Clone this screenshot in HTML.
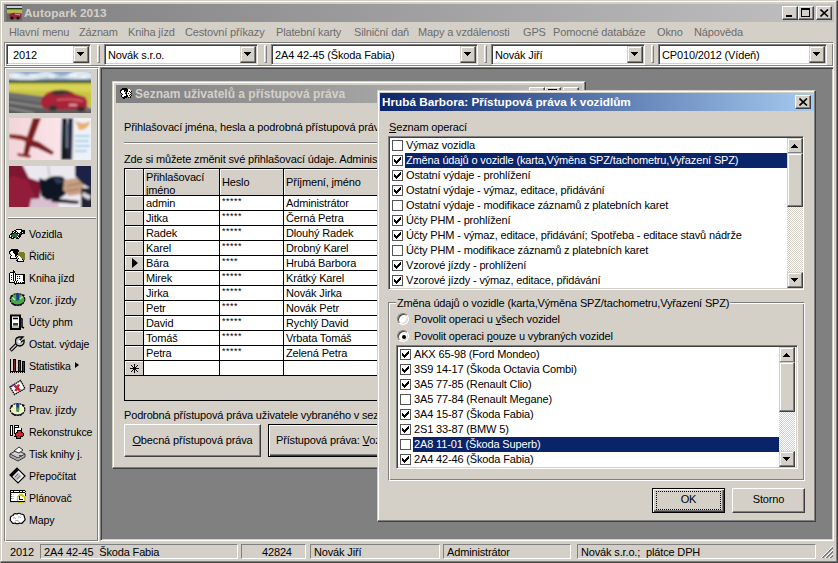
<!DOCTYPE html>
<html><head><meta charset="utf-8"><style>
*{box-sizing:border-box}
html,body{margin:0;padding:0}
body{width:838px;height:563px;overflow:hidden;position:relative;background:#D4D0C8;font-family:"Liberation Sans",sans-serif;font-size:11px;letter-spacing:-0.15px;color:#000}
.a{position:absolute}
.t{white-space:nowrap}
.btn{background:#D4D0C8;border:1px solid;border-color:#fff #404040 #404040 #fff;box-shadow:inset -1px -1px #808080,inset 1px 1px #D4D0C8}
.wfr{background:#D4D0C8;border:1px solid;border-color:#D4D0C8 #404040 #404040 #D4D0C8;box-shadow:inset -1px -1px #808080,inset 1px 1px #fff}
.sunk{border:1px solid;border-color:#808080 #fff #fff #808080;box-shadow:inset 1px 1px #404040,inset -1px -1px #D4D0C8}
.etch{border:1px solid;border-color:#808080 #fff #fff #808080;box-shadow:inset 1px 1px #fff,inset -1px -1px #808080}
.thin{border:1px solid;border-color:#808080 #fff #fff #808080}
.u{text-decoration:underline}
</style></head><body>
<div class="a wfr" style="left:0px;top:0px;width:838px;height:563px;"></div><div class="a " style="left:4px;top:4px;width:830px;height:18px;background:linear-gradient(to right,#808080,#C0C0C0)"></div><svg class="a" style="left:6px;top:5px" width="16" height="16"><rect width="16" height="16" fill="#707070"/><rect x="0" y="0" width="16" height="1" fill="#404040"/><rect x="1" y="1" width="15" height="2" fill="#c8ccd8"/><rect x="1" y="3" width="15" height="1.5" fill="#203818"/><rect x="1" y="4.5" width="15" height="4" fill="#b8b850"/><rect x="1" y="8.5" width="15" height="7" fill="#686868"/><path d="M3 10 Q6 7 10 8 L15 9 L15 13 L4 14Z" fill="#902838"/><path d="M9 9 L14 10" stroke="#e0a0b0" stroke-width="1"/><circle cx="6" cy="13" r="1.6" fill="#101010"/><circle cx="12" cy="13" r="1.6" fill="#201010"/></svg><div class="a t" style="left:24px;top:4px;height:18px;line-height:18px;font-weight:bold;font-size:11.8px;letter-spacing:0.1px;color:#D4D0C8">Autopark 2013</div><div class="a btn" style="left:782px;top:6px;width:16px;height:14px;"><div class="a" style="left:3px;top:8px;width:6px;height:2px;background:#000"></div></div><div class="a btn" style="left:798px;top:6px;width:16px;height:14px;"><div class="a" style="left:2px;top:1px;width:9px;height:9px;border:1px solid #000;border-top-width:2px"></div></div><div class="a btn" style="left:816px;top:6px;width:16px;height:14px;"><svg class="a" style="left:3px;top:2px" width="9" height="8" viewBox="0 0 9 8"><path d="M0.5 0.5L8 7.5M8 0.5L0.5 7.5" stroke="#000" stroke-width="1.6"/></svg></div><div class="a t" style="left:9px;top:23px;height:19px;line-height:19px;color:#6c6c6c">Hlavní menu</div><div class="a t" style="left:79px;top:23px;height:19px;line-height:19px;color:#6c6c6c">Záznam</div><div class="a t" style="left:128px;top:23px;height:19px;line-height:19px;color:#6c6c6c">Kniha jízd</div><div class="a t" style="left:185px;top:23px;height:19px;line-height:19px;color:#6c6c6c">Cestovní příkazy</div><div class="a t" style="left:276px;top:23px;height:19px;line-height:19px;color:#6c6c6c">Platební karty</div><div class="a t" style="left:354px;top:23px;height:19px;line-height:19px;color:#6c6c6c">Silniční daň</div><div class="a t" style="left:418px;top:23px;height:19px;line-height:19px;color:#6c6c6c">Mapy a vzdálenosti</div><div class="a t" style="left:523px;top:23px;height:19px;line-height:19px;color:#6c6c6c">GPS</div><div class="a t" style="left:553px;top:23px;height:19px;line-height:19px;color:#6c6c6c">Pomocné databáze</div><div class="a t" style="left:657px;top:23px;height:19px;line-height:19px;color:#6c6c6c">Okno</div><div class="a t" style="left:694px;top:23px;height:19px;line-height:19px;color:#6c6c6c">Nápověda</div><div class="a etch" style="left:4px;top:42px;width:830px;height:25px;"></div><div class="a sunk" style="left:6px;top:44px;width:85px;height:21px;background:#fff"><div class="a t" style="left:6px;top:2px;height:17px;line-height:17px">2012</div><div class="a wfr" style="right:1px;top:1px;width:16px;height:17px"><svg class="a" style="left:3px;top:5px" width="7" height="4"><path d="M0 0h7v1h-1v1h-1v1h-1v1h-1v-1h-1v-1h-1v-1h-1z" fill="#000"/></svg></div></div><div class="a " style="left:97px;top:45px;width:3px;height:18px;border-left:1px solid #fff;border-right:1px solid #808080;border-top:1px solid #fff;border-bottom:1px solid #808080"></div><div class="a sunk" style="left:104px;top:44px;width:154px;height:21px;background:#fff"><div class="a t" style="left:3px;top:2px;height:17px;line-height:17px">Novák s.r.o.</div><div class="a wfr" style="right:1px;top:1px;width:16px;height:17px"><svg class="a" style="left:3px;top:5px" width="7" height="4"><path d="M0 0h7v1h-1v1h-1v1h-1v1h-1v-1h-1v-1h-1v-1h-1z" fill="#000"/></svg></div></div><div class="a " style="left:264px;top:45px;width:3px;height:18px;border-left:1px solid #fff;border-right:1px solid #808080;border-top:1px solid #fff;border-bottom:1px solid #808080"></div><div class="a sunk" style="left:271px;top:44px;width:207px;height:21px;background:#fff"><div class="a t" style="left:3px;top:2px;height:17px;line-height:17px">2A4 42-45 (Škoda Fabia)</div><div class="a wfr" style="right:1px;top:1px;width:16px;height:17px"><svg class="a" style="left:3px;top:5px" width="7" height="4"><path d="M0 0h7v1h-1v1h-1v1h-1v1h-1v-1h-1v-1h-1v-1h-1z" fill="#000"/></svg></div></div><div class="a " style="left:484px;top:45px;width:3px;height:18px;border-left:1px solid #fff;border-right:1px solid #808080;border-top:1px solid #fff;border-bottom:1px solid #808080"></div><div class="a sunk" style="left:491px;top:44px;width:154px;height:21px;background:#fff"><div class="a t" style="left:3px;top:2px;height:17px;line-height:17px">Novák Jiří</div><div class="a wfr" style="right:1px;top:1px;width:16px;height:17px"><svg class="a" style="left:3px;top:5px" width="7" height="4"><path d="M0 0h7v1h-1v1h-1v1h-1v1h-1v-1h-1v-1h-1v-1h-1z" fill="#000"/></svg></div></div><div class="a " style="left:651px;top:45px;width:3px;height:18px;border-left:1px solid #fff;border-right:1px solid #808080;border-top:1px solid #fff;border-bottom:1px solid #808080"></div><div class="a sunk" style="left:658px;top:44px;width:169px;height:21px;background:#fff"><div class="a t" style="left:3px;top:2px;height:17px;line-height:17px">CP010/2012 (Vídeň)</div><div class="a wfr" style="right:1px;top:1px;width:16px;height:17px"><svg class="a" style="left:3px;top:5px" width="7" height="4"><path d="M0 0h7v1h-1v1h-1v1h-1v1h-1v-1h-1v-1h-1v-1h-1z" fill="#000"/></svg></div></div><div class="a etch" style="left:4px;top:67px;width:95px;height:475px;"></div><div class="a " style="left:9px;top:72px;width:82px;height:41px;overflow:hidden"><svg class="a" style="left:0;top:0" width="82" height="41" viewBox="0 0 82 41"><defs><filter id="b1" x="-10%" y="-10%" width="120%" height="120%"><feGaussianBlur stdDeviation="0.9"/></filter></defs>
<g filter="url(#b1)"><rect x="-2" y="-2" width="86" height="12" fill="#94aac8"/><path d="M-2 1 Q6 -1 14 2 T30 1 T46 2 T62 1 T84 2 L84 6 Q70 8 56 6 T30 7 T-2 6Z" fill="#dde6f0"/><path d="M4 4h6M20 3h8M40 5h6M60 3h8M72 5h6" stroke="#fff" stroke-width="1.5"/>
<rect x="-2" y="8" width="86" height="4" fill="#3a5230"/><path d="M-2 11 L84 11 L84 36 L60 28 L30 24 L-2 21Z" fill="#c8c444"/><path d="M-2 13 L84 13 L84 20 L-2 18Z" fill="#dcd85c" opacity="0.8"/>
<path d="M-2 20 L30 24 L60 28 L84 37 L84 43 L-2 43Z" fill="#707070"/><path d="M-2 26 L20 29 L84 40 L84 43 L-2 43Z" fill="#5c5c5c"/><path d="M0 30 L40 36 M0 36 L25 41" stroke="#9a9a9a" stroke-width="1.5"/>
<path d="M32 28 Q36 19 48 18 Q62 18 66 22 L76 25 Q80 30 77 37 L40 38 Q30 36 32 28Z" fill="#a82438"/><path d="M42 20 Q54 15 64 21 L46 24Z" fill="#4a3034"/>
<path d="M48 28 Q62 26 74 29" stroke="#d05868" stroke-width="2" fill="none"/><path d="M60 33h8" stroke="#f0c0c8" stroke-width="1.5"/><ellipse cx="44" cy="36" rx="4" ry="3" fill="#383030"/><ellipse cx="72" cy="37" rx="4" ry="2.5" fill="#402828"/></g></svg></div><div class="a " style="left:9px;top:118px;width:82px;height:42px;overflow:hidden"><svg class="a" style="left:0;top:0" width="82" height="42" viewBox="0 0 82 42"><defs><filter id="b2" x="-10%" y="-10%" width="120%" height="120%"><feGaussianBlur stdDeviation="0.8"/></filter><linearGradient id="g2" x1="0" x2="1"><stop offset="0" stop-color="#f2d4d8"/><stop offset="0.6" stop-color="#fae4e8"/><stop offset="1" stop-color="#f4eef2"/></linearGradient></defs>
<g filter="url(#b2)"><rect x="-2" y="-2" width="86" height="46" fill="url(#g2)"/>
<path d="M24 0 L32 0 L23 24 L19 38 L14 38 L17 22Z" fill="#7a1c1c"/><path d="M0 16 L12 17 L22 20 L23 26 L12 22 L0 20Z" fill="#8a2424"/><path d="M21 21 L30 24 L45 34 L43 37 L28 30 L20 28Z" fill="#7a1c20"/><path d="M8 35 L22 37 L21 40 L9 38Z" fill="#8a2a2a"/>
<rect x="51" y="-2" width="14" height="46" fill="#e8e8f0"/><path d="M53 0 L58 0 L59 42 L52 42Z" fill="#141a24"/><path d="M59 0 L64 0 L63 42 L58 42Z" fill="#202838"/><path d="M57 6 L59 6 L59 30 L57 30Z" fill="#6a7890"/>
<rect x="65" y="-2" width="19" height="46" fill="#eef2f8"/><path d="M66 2 Q72 8 81 3 Q80 12 70 12Z" fill="#eab070"/><path d="M66 18h15M66 23h14M66 28h15M66 33h12" stroke="#a8d0e8" stroke-width="2.2"/></g></svg></div><div class="a " style="left:9px;top:166px;width:82px;height:41px;overflow:hidden"><svg class="a" style="left:0;top:0" width="82" height="41" viewBox="0 0 82 41"><defs><filter id="b3" x="-10%" y="-10%" width="120%" height="120%"><feGaussianBlur stdDeviation="0.9"/></filter></defs>
<g filter="url(#b3)"><rect x="-2" y="-2" width="86" height="45" fill="#ece8f0"/><path d="M-2 -2 L13 -2 L20 12 L32 16 L30 43 L-2 43Z" fill="#7e1430"/><path d="M4 10 L18 14 L26 30 L20 43 L-2 43 L-2 14Z" fill="#941e3a"/><path d="M22 33 L48 31 L50 43 L20 43Z" fill="#d8c0d0"/>
<path d="M38 -2 L40 -2 L42 14 L40 14Z" fill="#c8c8d0"/>
<path d="M30 12 L36 14 Q44 8 54 11 Q60 16 57 28 L50 33 L38 34 L32 30 Z" fill="#101420"/><path d="M44 12 Q52 11 55 16 L48 18Z" fill="#303a58"/><path d="M44 32 L70 35 L69 38 L42 36Z" fill="#181820"/>
<path d="M55 14 L68 12 L75 18 L72 28 L60 30 L54 24Z" fill="#c8a084"/><path d="M58 20 L72 17 M58 25 L70 23" stroke="#8a6a58" stroke-width="1"/>
<path d="M66 -2 L84 -2 L84 24 L74 18 L66 10Z" fill="#1a2444"/><path d="M72 22 L84 22 L84 43 L72 43Z" fill="#282830"/><path d="M74 26 L82 30 L80 34 L73 30Z" fill="#d8d8e0"/></g></svg></div><div class="a " style="left:8px;top:217px;width:88px;height:2px;border-top:1px solid #fff;border-bottom:1px solid #808080"></div><div class="a t" style="left:29px;top:226px;height:16px;line-height:16px;font-size:10.6px;letter-spacing:-0.12px">Vozidla</div><svg class="a" style="left:9px;top:229px" width="16" height="10" shape-rendering="crispEdges"><path fill="#000" d="M7 0h6v1h-6zM5 1h2v1h-2zM12 1h4v1h-4zM3 2h2v1h-2zM6 2h2v1h-2zM12 2h4v1h-4zM3 3h1v1h-1zM5 3h2v1h-2zM8 3h1v1h-1zM11 3h2v1h-2zM14 3h2v1h-2zM2 4h3v1h-3zM7 4h3v1h-3zM12 4h4v1h-4zM1 5h2v1h-2zM10 5h3v1h-3zM0 6h1v1h-1zM10 6h2v1h-2zM0 7h1v1h-1zM2 7h1v1h-1zM9 7h3v1h-3zM0 8h3v1h-3zM4 8h2v1h-2zM8 8h1v1h-1zM10 8h1v1h-1zM2 9h3v1h-3zM7 9h3v1h-3z"/><path fill="#fff" d="M7 1h5v1h-5zM5 2h1v1h-1zM8 2h4v1h-4zM4 3h1v1h-1zM7 3h1v1h-1zM9 3h2v1h-2zM13 3h1v1h-1zM9 5h1v1h-1zM1 6h1v1h-1zM1 7h1v1h-1zM8 7h1v1h-1zM3 8h1v1h-1zM9 8h1v1h-1z"/><path fill="#2a6a3a" d="M5 4h2v1h-2zM10 4h2v1h-2zM3 5h6v1h-6zM2 6h8v1h-8zM3 7h5v1h-5zM6 8h2v1h-2z"/></svg><div class="a t" style="left:29px;top:248px;height:16px;line-height:16px;font-size:10.6px;letter-spacing:-0.12px">Řidiči</div><svg class="a" style="left:9px;top:249px" width="17" height="13" shape-rendering="crispEdges"><path fill="#000" d="M2 0h7v1h-7zM1 1h9v1h-9zM0 2h2v1h-2zM4 2h6v1h-6zM0 3h1v1h-1zM4 3h5v1h-5zM0 4h1v1h-1zM5 4h4v1h-4zM1 5h1v1h-1zM6 5h3v1h-3zM2 6h1v1h-1zM6 6h2v1h-2zM1 7h1v1h-1zM6 7h1v1h-1zM8 7h1v1h-1zM1 8h1v1h-1zM7 8h1v1h-1zM1 9h7v1h-7zM9 9h1v1h-1zM8 10h1v1h-1zM13 10h1v1h-1zM7 11h2v1h-2zM14 11h1v1h-1zM8 12h7v1h-7z"/><path fill="#fff" d="M2 2h2v1h-2zM1 3h3v1h-3zM2 4h3v1h-3zM2 5h4v1h-4zM3 6h3v1h-3zM8 6h1v1h-1zM2 7h4v1h-4zM9 7h2v1h-2zM2 8h5v1h-5zM9 8h3v1h-3zM10 9h3v1h-3zM9 10h4v1h-4zM9 11h5v1h-5z"/><path fill="#7a7a22" d="M10 3h5v1h-5zM9 4h7v1h-7zM9 5h7v1h-7zM9 6h7v1h-7zM11 7h5v1h-5zM12 8h4v1h-4zM13 9h3v1h-3zM14 10h2v1h-2z"/></svg><div class="a t" style="left:29px;top:270px;height:16px;line-height:16px;font-size:10.6px;letter-spacing:-0.12px">Kniha jízd</div><svg class="a" style="left:9px;top:270px" width="16" height="15" shape-rendering="crispEdges"><path fill="#000" d="M4 0h1v1h-1zM4 1h2v1h-2zM1 2h5v1h-5zM0 3h1v1h-1zM4 3h1v1h-1zM6 3h1v1h-1zM0 4h1v1h-1zM4 4h1v1h-1zM6 4h10v1h-10zM0 5h1v1h-1zM2 5h1v1h-1zM4 5h1v1h-1zM6 5h1v1h-1zM14 5h2v1h-2zM0 6h1v1h-1zM4 6h1v1h-1zM6 6h1v1h-1zM8 6h1v1h-1zM10 6h1v1h-1zM14 6h2v1h-2zM0 7h1v1h-1zM2 7h1v1h-1zM4 7h1v1h-1zM6 7h1v1h-1zM14 7h2v1h-2zM0 8h1v1h-1zM4 8h1v1h-1zM6 8h1v1h-1zM8 8h1v1h-1zM10 8h1v1h-1zM14 8h2v1h-2zM0 9h1v1h-1zM2 9h1v1h-1zM4 9h1v1h-1zM6 9h1v1h-1zM14 9h2v1h-2zM0 10h1v1h-1zM4 10h1v1h-1zM6 10h1v1h-1zM8 10h1v1h-1zM14 10h2v1h-2zM0 11h1v1h-1zM5 11h1v1h-1zM7 11h1v1h-1zM15 11h1v1h-1zM0 12h6v1h-6zM7 12h1v1h-1zM9 12h1v1h-1zM11 12h1v1h-1zM13 12h3v1h-3zM5 13h11v1h-11zM6 14h1v1h-1z"/><path fill="#fff" d="M1 3h3v1h-3zM5 3h1v1h-1zM1 4h3v1h-3zM5 4h1v1h-1zM1 5h1v1h-1zM3 5h1v1h-1zM5 5h1v1h-1zM7 5h7v1h-7zM1 6h3v1h-3zM5 6h1v1h-1zM7 6h1v1h-1zM9 6h1v1h-1zM11 6h3v1h-3zM1 7h1v1h-1zM3 7h1v1h-1zM5 7h1v1h-1zM7 7h7v1h-7zM1 8h3v1h-3zM5 8h1v1h-1zM7 8h1v1h-1zM9 8h1v1h-1zM11 8h3v1h-3zM1 9h1v1h-1zM3 9h1v1h-1zM5 9h1v1h-1zM7 9h7v1h-7zM1 10h3v1h-3zM5 10h1v1h-1zM7 10h1v1h-1zM9 10h5v1h-5zM1 11h4v1h-4zM6 11h1v1h-1zM8 11h7v1h-7zM6 12h1v1h-1zM8 12h1v1h-1zM10 12h1v1h-1zM12 12h1v1h-1z"/></svg><div class="a t" style="left:29px;top:292px;height:16px;line-height:16px;font-size:10.6px;letter-spacing:-0.12px">Vzor. jízdy</div><svg class="a" style="left:9px;top:291px" width="17" height="17" viewBox="0 0 17 17"><ellipse cx="8.5" cy="8.5" rx="7.3" ry="6" fill="#48a848" stroke="#000" stroke-width="1.2" stroke-dasharray="2 1"/><path d="M7 2.5 L10.5 2.5 L10 9 L7.5 10Z" fill="#1e3c8c"/><path d="M2.5 11 Q8.5 16 14.5 11 L13 14 Q8.5 15.5 4 14Z" fill="#0a1028"/><path d="M3 6 L6 9 M14 5 L11 8" stroke="#b8f0b8" stroke-width="1.2"/><path d="M1 5 L4 4 L3 7Z M16 4 L13 3 L14 6Z" fill="#000"/></svg><div class="a t" style="left:29px;top:314px;height:16px;line-height:16px;font-size:10.6px;letter-spacing:-0.12px">Účty phm</div><svg class="a" style="left:9px;top:313px" width="17" height="17" viewBox="0 0 17 17"><path d="M2 2.5 L11 2.5 L11 16 L2 16Z" fill="#fff" stroke="#000" stroke-width="2"/><path d="M4 5.5h5M4 11h5" stroke="#000" stroke-width="1.5"/><path d="M4 12.5h5" stroke="#808080" stroke-width="1"/><path d="M11.5 5 L13 6 L13 14 L15 15" fill="none" stroke="#000" stroke-width="1.5"/><rect x="3" y="13" width="7" height="2" fill="#c0c0c0"/></svg><div class="a t" style="left:29px;top:336px;height:16px;line-height:16px;font-size:10.6px;letter-spacing:-0.12px">Ostat. výdaje</div><svg class="a" style="left:9px;top:335px" width="17" height="17" viewBox="0 0 17 17"><path d="M1.5 15.5 L8 9" stroke="#000" stroke-width="3.6"/><path d="M2 15 L8 9" stroke="#c8c8c8" stroke-width="1.4"/><path d="M7 9 Q5 3 10 2 L14 2 L11 5 L12 7 L15 5 Q16 10 11 11 Q8 11 7 9Z" fill="#c0c0c0" stroke="#000" stroke-width="1.3"/><circle cx="10.5" cy="6.5" r="1.5" fill="#fff"/></svg><div class="a t" style="left:29px;top:358px;height:16px;line-height:16px;font-size:10.6px;letter-spacing:-0.12px">Statistika</div><svg class="a" style="left:10px;top:359px" width="15" height="14" shape-rendering="crispEdges"><path fill="#000" d="M0 0h1v1h-1zM3 0h3v1h-3zM0 1h1v1h-1zM3 1h1v1h-1zM5 1h1v1h-1zM8 1h3v1h-3zM0 2h1v1h-1zM3 2h1v1h-1zM5 2h1v1h-1zM8 2h1v1h-1zM10 2h1v1h-1zM12 2h3v1h-3zM0 3h1v1h-1zM3 3h1v1h-1zM5 3h1v1h-1zM8 3h1v1h-1zM10 3h1v1h-1zM12 3h1v1h-1zM14 3h1v1h-1zM0 4h1v1h-1zM3 4h1v1h-1zM5 4h1v1h-1zM8 4h1v1h-1zM10 4h1v1h-1zM12 4h1v1h-1zM14 4h1v1h-1zM0 5h1v1h-1zM3 5h1v1h-1zM5 5h1v1h-1zM8 5h1v1h-1zM10 5h1v1h-1zM12 5h1v1h-1zM14 5h1v1h-1zM0 6h1v1h-1zM3 6h1v1h-1zM5 6h1v1h-1zM8 6h1v1h-1zM10 6h1v1h-1zM12 6h1v1h-1zM14 6h1v1h-1zM0 7h1v1h-1zM3 7h1v1h-1zM5 7h1v1h-1zM8 7h1v1h-1zM10 7h1v1h-1zM12 7h1v1h-1zM14 7h1v1h-1zM0 8h1v1h-1zM3 8h1v1h-1zM5 8h1v1h-1zM8 8h1v1h-1zM10 8h1v1h-1zM12 8h1v1h-1zM14 8h1v1h-1zM0 9h1v1h-1zM3 9h1v1h-1zM5 9h1v1h-1zM8 9h1v1h-1zM10 9h1v1h-1zM12 9h1v1h-1zM14 9h1v1h-1zM0 10h1v1h-1zM3 10h1v1h-1zM5 10h1v1h-1zM8 10h1v1h-1zM10 10h1v1h-1zM12 10h1v1h-1zM14 10h1v1h-1zM0 11h1v1h-1zM3 11h1v1h-1zM5 11h1v1h-1zM8 11h1v1h-1zM10 11h1v1h-1zM12 11h1v1h-1zM14 11h1v1h-1zM0 12h15v1h-15zM0 13h1v1h-1zM2 13h1v1h-1zM4 13h1v1h-1zM6 13h1v1h-1zM8 13h1v1h-1zM10 13h1v1h-1zM12 13h1v1h-1zM14 13h1v1h-1z"/><path fill="#7a2030" d="M4 1h1v1h-1zM4 2h1v1h-1zM9 2h1v1h-1zM4 3h1v1h-1zM9 3h1v1h-1zM13 3h1v1h-1zM4 4h1v1h-1zM9 4h1v1h-1zM13 4h1v1h-1zM4 5h1v1h-1zM9 5h1v1h-1zM13 5h1v1h-1zM4 6h1v1h-1zM9 6h1v1h-1zM13 6h1v1h-1zM4 7h1v1h-1zM9 7h1v1h-1zM13 7h1v1h-1zM4 8h1v1h-1zM9 8h1v1h-1zM13 8h1v1h-1zM4 9h1v1h-1zM9 9h1v1h-1zM13 9h1v1h-1zM4 10h1v1h-1zM9 10h1v1h-1zM13 10h1v1h-1zM4 11h1v1h-1zM9 11h1v1h-1zM13 11h1v1h-1z"/></svg><div class="a t" style="left:29px;top:380px;height:16px;line-height:16px;font-size:10.6px;letter-spacing:-0.12px">Pauzy</div><svg class="a" style="left:9px;top:379px" width="17" height="17" viewBox="0 0 17 17"><path d="M1 8 L11.5 1.5 L16 9.5 L5.5 15.5Z" fill="#fff" stroke="#000" stroke-width="1.3" stroke-dasharray="1.6 0.6"/><path d="M5.5 6.5 L11 11.5 M10 5.5 L6.5 12" stroke="#c02030" stroke-width="2.4"/><path d="M1.5 8 L6 5" stroke="#402080" stroke-width="1.2"/></svg><div class="a t" style="left:29px;top:402px;height:16px;line-height:16px;font-size:10.6px;letter-spacing:-0.12px">Prav. jízdy</div><svg class="a" style="left:9px;top:401px" width="17" height="17" viewBox="0 0 17 17"><ellipse cx="8.5" cy="8.5" rx="7.3" ry="6" fill="#f2f2c0" stroke="#000" stroke-width="1.2" stroke-dasharray="2 1"/><path d="M7 2.5 L10.5 2.5 L10 9 L7.5 10Z" fill="#1e3c8c"/><path d="M7.5 6.5 L10.5 6.5 L10 11 L7.5 11Z" fill="#40a040"/><path d="M2.5 11 Q8.5 16 14.5 11 L13 14 Q8.5 15.5 4 14Z" fill="#0a1028"/><path d="M1 5 L4 4 L3 7Z M16 4 L13 3 L14 6Z" fill="#000"/></svg><div class="a t" style="left:29px;top:424px;height:16px;line-height:16px;font-size:10.6px;letter-spacing:-0.12px">Rekonstrukce</div><svg class="a" style="left:10px;top:425px" width="15" height="14" shape-rendering="crispEdges"><path fill="#000" d="M0 0h3v1h-3zM4 0h5v1h-5zM0 1h1v1h-1zM2 1h1v1h-1zM4 1h1v1h-1zM8 1h1v1h-1zM0 2h1v1h-1zM2 2h1v1h-1zM4 2h5v1h-5zM0 3h1v1h-1zM2 3h1v1h-1zM4 3h1v1h-1zM11 3h1v1h-1zM0 4h1v1h-1zM2 4h1v1h-1zM4 4h1v1h-1zM11 4h1v1h-1zM0 5h1v1h-1zM2 5h1v1h-1zM4 5h1v1h-1zM7 5h5v1h-5zM0 6h1v1h-1zM2 6h1v1h-1zM4 6h1v1h-1zM7 6h1v1h-1zM11 6h1v1h-1zM0 7h1v1h-1zM2 7h1v1h-1zM4 7h1v1h-1zM6 7h2v1h-2zM11 7h2v1h-2zM0 8h1v1h-1zM2 8h1v1h-1zM4 8h2v1h-2zM13 8h1v1h-1zM0 9h1v1h-1zM2 9h1v1h-1zM5 9h1v1h-1zM13 9h1v1h-1zM0 10h3v1h-3zM5 10h1v1h-1zM13 10h1v1h-1zM4 11h3v1h-3zM10 11h3v1h-3zM6 12h1v1h-1zM10 12h1v1h-1zM6 13h5v1h-5z"/><path fill="#fff" d="M1 1h1v1h-1zM5 1h3v1h-3zM1 2h1v1h-1zM1 3h1v1h-1zM5 3h6v1h-6zM1 4h1v1h-1zM5 4h6v1h-6zM1 5h1v1h-1zM5 5h2v1h-2zM1 6h1v1h-1zM5 6h2v1h-2zM1 7h1v1h-1zM5 7h1v1h-1zM1 8h1v1h-1zM1 9h1v1h-1z"/><path fill="#d02828" d="M8 6h3v1h-3zM8 7h3v1h-3zM6 8h7v1h-7zM6 9h7v1h-7zM6 10h7v1h-7zM7 11h3v1h-3zM7 12h3v1h-3z"/></svg><div class="a t" style="left:29px;top:446px;height:16px;line-height:16px;font-size:10.6px;letter-spacing:-0.12px">Tisk knihy j.</div><svg class="a" style="left:9px;top:445px" width="17" height="17" viewBox="0 0 17 17"><path d="M1 9 L8 5 L16 9 L16 12 L9 16 L1 12Z" fill="#d0d0d0" stroke="#303030" stroke-width="1"/><path d="M5 6 L10 2 L14 5 L10 8Z" fill="#fff" stroke="#303030" stroke-width="1"/><path d="M1 9 L9 13 L16 9" fill="none" stroke="#303030" stroke-width="1"/><path d="M2 11 L9 14.5 L15 11.5" fill="none" stroke="#888" stroke-width="0.8"/><rect x="10" y="10" width="3" height="1.5" fill="#505050"/></svg><div class="a t" style="left:29px;top:468px;height:16px;line-height:16px;font-size:10.6px;letter-spacing:-0.12px">Přepočítat</div><svg class="a" style="left:9px;top:467px" width="17" height="17" viewBox="0 0 17 17"><path d="M1 8 L8 1 L16 9 L9 16Z" fill="#fff" stroke="#000" stroke-width="1.2"/><path d="M1 8 L8 1 L10 3 L3 10Z" fill="#000"/><path d="M4 10 L9 5 L13 9 L8 14Z" fill="#c0c0c0"/><path d="M6 10 L9 7 M8 12 L11 9" stroke="#606060" stroke-width="0.8"/></svg><div class="a t" style="left:29px;top:490px;height:16px;line-height:16px;font-size:10.6px;letter-spacing:-0.12px">Plánovač</div><svg class="a" style="left:10px;top:490px" width="16" height="13" shape-rendering="crispEdges"><path fill="#000" d="M0 0h15v1h-15zM0 1h1v1h-1zM3 1h1v1h-1zM9 1h1v1h-1zM12 1h1v1h-1zM15 1h1v1h-1zM0 2h15v1h-15zM0 3h1v1h-1zM15 3h1v1h-1zM0 4h1v1h-1zM15 4h1v1h-1zM0 5h1v1h-1zM15 5h1v1h-1zM0 6h1v1h-1zM9 6h1v1h-1zM0 7h1v1h-1zM9 7h1v1h-1zM0 8h1v1h-1zM9 8h1v1h-1zM0 9h1v1h-1zM9 9h4v1h-4zM0 10h1v1h-1zM0 11h15v1h-15z"/><path fill="#c0c0c0" d="M15 0h1v1h-1zM15 2h1v1h-1zM3 4h1v1h-1zM2 6h2v1h-2zM15 6h1v1h-1zM15 7h1v1h-1zM2 8h2v1h-2zM15 8h1v1h-1zM15 9h1v1h-1zM15 10h1v1h-1zM15 11h1v1h-1zM0 12h8v1h-8zM14 12h2v1h-2z"/><path fill="#fff" d="M1 1h2v1h-2zM4 1h5v1h-5zM10 1h2v1h-2zM13 1h2v1h-2zM1 3h14v1h-14zM2 4h1v1h-1zM4 4h5v1h-5zM13 4h2v1h-2zM1 5h7v1h-7zM14 5h1v1h-1zM4 6h3v1h-3zM10 6h2v1h-2zM1 7h6v1h-6zM8 7h1v1h-1zM10 7h4v1h-4zM4 8h3v1h-3zM8 8h1v1h-1zM10 8h4v1h-4zM1 9h6v1h-6zM8 9h1v1h-1zM13 9h1v1h-1zM1 10h6v1h-6zM8 10h6v1h-6z"/><path fill="#808080" d="M1 4h1v1h-1zM1 6h1v1h-1zM1 8h1v1h-1z"/><path fill="#d0c030" d="M9 4h4v1h-4zM8 5h6v1h-6zM7 6h2v1h-2zM12 6h3v1h-3zM7 7h1v1h-1zM14 7h1v1h-1zM7 8h1v1h-1zM14 8h1v1h-1zM7 9h1v1h-1zM14 9h1v1h-1zM7 10h1v1h-1zM14 10h1v1h-1zM8 12h6v1h-6z"/></svg><div class="a t" style="left:29px;top:512px;height:16px;line-height:16px;font-size:10.6px;letter-spacing:-0.12px">Mapy</div><svg class="a" style="left:9px;top:511px" width="17" height="17" viewBox="0 0 17 17"><path d="M1.5 8 Q1 5 4 4.5 Q5 2 8 3 Q10 1.5 12 3 Q15.5 3 15.5 6.5 Q17 9 14.5 10.5 Q13.5 13 10.5 12 Q8 13.5 6 12 Q3 13 2.5 10.5 Q0.5 9.5 1.5 8Z" fill="#fff" stroke="#000" stroke-width="1.2"/><path d="M4 7 Q6 6 7 8 M9 6 Q11 5 12 7 M6 10 Q8 9 10 10" stroke="#909090" stroke-width="0.8" fill="none"/></svg><div class="a " style="left:75px;top:362px;width:0px;height:0px;border-top:3.5px solid transparent;border-bottom:3.5px solid transparent;border-left:4px solid #000"></div><div class="a " style="left:100px;top:67px;width:734px;height:474px;background:#808080;border:1px solid;border-color:#808080 #fff #fff #808080;box-shadow:inset 1px 1px #404040,inset -1px -1px #D4D0C8"></div><div class="a t" style="left:10px;top:545px;height:15px;line-height:15px;">2012</div><div class="a thin" style="left:40px;top:544px;width:198px;height:15px"><div class="a t" style="left:3px;top:0px;height:15px;line-height:15px">2A4 42-45&nbsp;&nbsp;Škoda Fabia</div></div><div class="a thin" style="left:241px;top:544px;width:65px;height:15px"><div class="a t" style="left:20px;top:0px;height:15px;line-height:15px">42824</div></div><div class="a thin" style="left:310px;top:544px;width:130px;height:15px"><div class="a t" style="left:3px;top:0px;height:15px;line-height:15px">Novák Jiří</div></div><div class="a thin" style="left:443px;top:544px;width:128px;height:15px"><div class="a t" style="left:3px;top:0px;height:15px;line-height:15px">Administrátor</div></div><div class="a thin" style="left:577px;top:544px;width:239px;height:15px"><div class="a t" style="left:3px;top:0px;height:15px;line-height:15px">Novák s.r.o.;&nbsp; plátce DPH</div></div><div class="a " style="left:820px;top:545px;width:14px;height:14px;"><svg width="14" height="14" shape-rendering="crispEdges"><path d="M13 1L1 13M13 5L5 13M13 9L9 13" stroke="#fff" stroke-width="1"/><path d="M13 2L2 13M13 3L3 13M13 6L6 13M13 7L7 13M13 10L10 13M13 11L11 13" stroke="#808080" stroke-width="1"/></svg></div><div class="a wfr" style="left:112px;top:81px;width:474px;height:388px;"></div><div class="a " style="left:116px;top:85px;width:466px;height:18px;background:linear-gradient(to right,#808080,#C0C0C0)"></div><svg class="a" style="left:120px;top:88px" width="12" height="11" shape-rendering="crispEdges"><path fill="#000" d="M2 0h5v1h-5zM1 1h7v1h-7zM0 2h2v1h-2zM4 2h4v1h-4zM0 3h1v1h-1zM4 3h1v1h-1zM6 3h2v1h-2zM9 3h1v1h-1zM11 3h1v1h-1zM0 4h1v1h-1zM6 4h1v1h-1zM10 4h1v1h-1zM1 5h1v1h-1zM5 5h2v1h-2zM8 5h1v1h-1zM11 5h1v1h-1zM2 6h1v1h-1zM6 6h1v1h-1zM10 6h1v1h-1zM1 7h1v1h-1zM6 7h2v1h-2zM9 7h1v1h-1zM11 7h1v1h-1zM1 8h1v1h-1zM4 8h4v1h-4zM10 8h1v1h-1zM2 9h5v1h-5zM8 9h1v1h-1zM10 9h1v1h-1zM3 10h2v1h-2z"/><path fill="#f4f4d8" d="M8 1h2v1h-2zM8 2h3v1h-3zM8 3h1v1h-1zM10 3h1v1h-1zM7 4h3v1h-3zM7 5h1v1h-1zM9 5h2v1h-2zM7 6h3v1h-3zM8 7h1v1h-1zM10 7h1v1h-1zM8 8h2v1h-2z"/><path fill="#fff" d="M2 2h2v1h-2zM1 3h3v1h-3zM1 4h4v1h-4zM2 5h3v1h-3zM3 6h3v1h-3zM2 7h4v1h-4zM2 8h2v1h-2z"/></svg><div class="a t" style="left:135px;top:85px;height:18px;line-height:18px;font-weight:bold;font-size:12px;letter-spacing:0;color:#D4D0C8">Seznam uživatelů a přístupová práva</div><div class="a btn" style="left:529px;top:87px;width:16px;height:14px;"><div class="a" style="left:3px;top:8px;width:6px;height:2px;background:#000"></div></div><div class="a btn" style="left:545px;top:87px;width:16px;height:14px;"><div class="a" style="left:2px;top:1px;width:9px;height:9px;border:1px solid #000;border-top-width:2px"></div></div><div class="a btn" style="left:563px;top:87px;width:16px;height:14px;"><svg class="a" style="left:3px;top:2px" width="9" height="8" viewBox="0 0 9 8"><path d="M0.5 0.5L8 7.5M8 0.5L0.5 7.5" stroke="#000" stroke-width="1.6"/></svg></div><div class="a t" style="left:124px;top:120px;height:15px;line-height:15px;">Přihlašovací jména, hesla a podrobná přístupová práva</div><div class="a " style="left:124px;top:142px;width:450px;height:2px;border-top:1px solid #808080;border-bottom:1px solid #fff"></div><div class="a t" style="left:124px;top:152px;height:15px;line-height:15px;">Zde si můžete změnit své přihlašovací údaje. Administrátor</div><div class="a " style="left:124px;top:168px;width:450px;height:233px;background:#D4D0C8;border:1px solid #000"></div><div class="a " style="left:143px;top:195px;width:430px;height:180px;background:#fff"></div><div class="a " style="left:124px;top:195px;width:450px;height:1px;background:#000"></div><div class="a " style="left:124px;top:210px;width:450px;height:1px;background:#000"></div><div class="a " style="left:124px;top:225px;width:450px;height:1px;background:#000"></div><div class="a " style="left:124px;top:240px;width:450px;height:1px;background:#000"></div><div class="a " style="left:124px;top:255px;width:450px;height:1px;background:#000"></div><div class="a " style="left:124px;top:270px;width:450px;height:1px;background:#000"></div><div class="a " style="left:124px;top:285px;width:450px;height:1px;background:#000"></div><div class="a " style="left:124px;top:300px;width:450px;height:1px;background:#000"></div><div class="a " style="left:124px;top:315px;width:450px;height:1px;background:#000"></div><div class="a " style="left:124px;top:330px;width:450px;height:1px;background:#000"></div><div class="a " style="left:124px;top:345px;width:450px;height:1px;background:#000"></div><div class="a " style="left:124px;top:360px;width:450px;height:1px;background:#000"></div><div class="a " style="left:124px;top:375px;width:450px;height:1px;background:#000"></div><div class="a " style="left:143px;top:168px;width:1px;height:207px;background:#000"></div><div class="a " style="left:219px;top:168px;width:1px;height:207px;background:#000"></div><div class="a " style="left:283px;top:168px;width:1px;height:207px;background:#000"></div><div class="a " style="left:125px;top:169px;width:18px;height:1px;background:#fff"></div><div class="a " style="left:125px;top:169px;width:1px;height:26px;background:#fff"></div><div class="a " style="left:144px;top:169px;width:75px;height:1px;background:#fff"></div><div class="a " style="left:144px;top:169px;width:1px;height:26px;background:#fff"></div><div class="a " style="left:220px;top:169px;width:63px;height:1px;background:#fff"></div><div class="a " style="left:220px;top:169px;width:1px;height:26px;background:#fff"></div><div class="a " style="left:284px;top:169px;width:290px;height:1px;background:#fff"></div><div class="a " style="left:284px;top:169px;width:1px;height:26px;background:#fff"></div><div class="a " style="left:125px;top:196px;width:18px;height:1px;background:#fff"></div><div class="a " style="left:125px;top:196px;width:1px;height:14px;background:#fff"></div><div class="a " style="left:125px;top:211px;width:18px;height:1px;background:#fff"></div><div class="a " style="left:125px;top:211px;width:1px;height:14px;background:#fff"></div><div class="a " style="left:125px;top:226px;width:18px;height:1px;background:#fff"></div><div class="a " style="left:125px;top:226px;width:1px;height:14px;background:#fff"></div><div class="a " style="left:125px;top:241px;width:18px;height:1px;background:#fff"></div><div class="a " style="left:125px;top:241px;width:1px;height:14px;background:#fff"></div><div class="a " style="left:125px;top:256px;width:18px;height:1px;background:#fff"></div><div class="a " style="left:125px;top:256px;width:1px;height:14px;background:#fff"></div><div class="a " style="left:125px;top:271px;width:18px;height:1px;background:#fff"></div><div class="a " style="left:125px;top:271px;width:1px;height:14px;background:#fff"></div><div class="a " style="left:125px;top:286px;width:18px;height:1px;background:#fff"></div><div class="a " style="left:125px;top:286px;width:1px;height:14px;background:#fff"></div><div class="a " style="left:125px;top:301px;width:18px;height:1px;background:#fff"></div><div class="a " style="left:125px;top:301px;width:1px;height:14px;background:#fff"></div><div class="a " style="left:125px;top:316px;width:18px;height:1px;background:#fff"></div><div class="a " style="left:125px;top:316px;width:1px;height:14px;background:#fff"></div><div class="a " style="left:125px;top:331px;width:18px;height:1px;background:#fff"></div><div class="a " style="left:125px;top:331px;width:1px;height:14px;background:#fff"></div><div class="a " style="left:125px;top:346px;width:18px;height:1px;background:#fff"></div><div class="a " style="left:125px;top:346px;width:1px;height:14px;background:#fff"></div><div class="a " style="left:125px;top:361px;width:18px;height:1px;background:#fff"></div><div class="a " style="left:125px;top:361px;width:1px;height:14px;background:#fff"></div><div class="a t" style="left:146px;top:171px;height:12px;line-height:12px;">Přihlašovací</div><div class="a t" style="left:146px;top:184px;height:12px;line-height:12px;">jméno</div><div class="a t" style="left:222px;top:175px;height:15px;line-height:15px;">Heslo</div><div class="a t" style="left:286px;top:175px;height:15px;line-height:15px;">Příjmení, jméno</div><div class="a t" style="left:146px;top:196px;height:14px;line-height:14px;">admin</div><div class="a t" style="left:222px;top:194px;height:14px;line-height:14px;font-size:9px;letter-spacing:0.5px">*****</div><div class="a t" style="left:286px;top:196px;height:14px;line-height:14px;">Administrátor</div><div class="a t" style="left:146px;top:211px;height:14px;line-height:14px;">Jitka</div><div class="a t" style="left:222px;top:209px;height:14px;line-height:14px;font-size:9px;letter-spacing:0.5px">*****</div><div class="a t" style="left:286px;top:211px;height:14px;line-height:14px;">Černá Petra</div><div class="a t" style="left:146px;top:226px;height:14px;line-height:14px;">Radek</div><div class="a t" style="left:222px;top:224px;height:14px;line-height:14px;font-size:9px;letter-spacing:0.5px">*****</div><div class="a t" style="left:286px;top:226px;height:14px;line-height:14px;">Dlouhý Radek</div><div class="a t" style="left:146px;top:241px;height:14px;line-height:14px;">Karel</div><div class="a t" style="left:222px;top:239px;height:14px;line-height:14px;font-size:9px;letter-spacing:0.5px">*****</div><div class="a t" style="left:286px;top:241px;height:14px;line-height:14px;">Drobný Karel</div><div class="a t" style="left:146px;top:256px;height:14px;line-height:14px;">Bára</div><div class="a t" style="left:222px;top:254px;height:14px;line-height:14px;font-size:9px;letter-spacing:0.5px">****</div><div class="a t" style="left:286px;top:256px;height:14px;line-height:14px;">Hrubá Barbora</div><div class="a t" style="left:146px;top:271px;height:14px;line-height:14px;">Mirek</div><div class="a t" style="left:222px;top:269px;height:14px;line-height:14px;font-size:9px;letter-spacing:0.5px">*****</div><div class="a t" style="left:286px;top:271px;height:14px;line-height:14px;">Krátký Karel</div><div class="a t" style="left:146px;top:286px;height:14px;line-height:14px;">Jirka</div><div class="a t" style="left:222px;top:284px;height:14px;line-height:14px;font-size:9px;letter-spacing:0.5px">*****</div><div class="a t" style="left:286px;top:286px;height:14px;line-height:14px;">Novák Jirka</div><div class="a t" style="left:146px;top:301px;height:14px;line-height:14px;">Petr</div><div class="a t" style="left:222px;top:299px;height:14px;line-height:14px;font-size:9px;letter-spacing:0.5px">****</div><div class="a t" style="left:286px;top:301px;height:14px;line-height:14px;">Novák Petr</div><div class="a t" style="left:146px;top:316px;height:14px;line-height:14px;">David</div><div class="a t" style="left:222px;top:314px;height:14px;line-height:14px;font-size:9px;letter-spacing:0.5px">*****</div><div class="a t" style="left:286px;top:316px;height:14px;line-height:14px;">Rychlý David</div><div class="a t" style="left:146px;top:331px;height:14px;line-height:14px;">Tomáš</div><div class="a t" style="left:222px;top:329px;height:14px;line-height:14px;font-size:9px;letter-spacing:0.5px">*****</div><div class="a t" style="left:286px;top:331px;height:14px;line-height:14px;">Vrbata Tomáš</div><div class="a t" style="left:146px;top:346px;height:14px;line-height:14px;">Petra</div><div class="a t" style="left:222px;top:344px;height:14px;line-height:14px;font-size:9px;letter-spacing:0.5px">*****</div><div class="a t" style="left:286px;top:346px;height:14px;line-height:14px;">Zelená Petra</div><div class="a t" style="left:146px;top:361px;height:14px;line-height:14px;"></div><div class="a t" style="left:222px;top:359px;height:14px;line-height:14px;font-size:9px;letter-spacing:0.5px"></div><div class="a t" style="left:286px;top:361px;height:14px;line-height:14px;"></div><div class="a " style="left:132px;top:258px;width:0px;height:0px;border-top:5.5px solid transparent;border-bottom:5.5px solid transparent;border-left:6px solid #000"></div><svg class="a" style="left:130px;top:364px" width="9" height="9" shape-rendering="crispEdges"><path fill="#000" d="M4 0h1v1h-1zM1 1h1v1h-1zM4 1h1v1h-1zM7 1h1v1h-1zM2 2h1v1h-1zM4 2h1v1h-1zM6 2h1v1h-1zM3 3h3v1h-3zM0 4h9v1h-9zM3 5h3v1h-3zM2 6h1v1h-1zM4 6h1v1h-1zM6 6h1v1h-1zM1 7h1v1h-1zM4 7h1v1h-1zM7 7h1v1h-1zM4 8h1v1h-1z"/></svg><div class="a t" style="left:124px;top:408px;height:15px;line-height:15px;">Podrobná přístupová práva uživatele vybraného v seznamu</div><div class="a btn" style="left:124px;top:424px;width:137px;height:33px"><div class="a t" style="left:0;right:0;top:8px;height:15px;line-height:15px;text-align:center"><span class="u">O</span>becná přístupová práva</div></div><div class="a" style="left:268px;top:424px;width:180px;height:33px;background:#D4D0C8;border:1px solid #000;box-shadow:inset 1px 1px #fff,inset -1px -1px #404040,inset -2px -2px #808080"><div class="a t" style="left:7px;top:8px;height:15px;line-height:15px">Přístupová práva: <span class="u">V</span>ozidla</div></div><div class="a wfr" style="left:377px;top:90px;width:439px;height:432px;"></div><div class="a " style="left:380px;top:93px;width:434px;height:18px;background:linear-gradient(to right,#0A246A,#A6CAF0)"></div><div class="a t" style="left:382px;top:93px;height:18px;line-height:18px;font-weight:bold;font-size:11.75px;letter-spacing:0;color:#fff">Hrubá Barbora: Přístupová práva k vozidlům</div><div class="a btn" style="left:795px;top:95px;width:16px;height:14px;"><svg class="a" style="left:3px;top:2px" width="9" height="8" viewBox="0 0 9 8"><path d="M0.5 0.5L8 7.5M8 0.5L0.5 7.5" stroke="#000" stroke-width="1.6"/></svg></div><div class="a t" style="left:389px;top:120px;height:15px;line-height:15px;"><span class="u">S</span>eznam operací</div><div class="a sunk" style="left:388px;top:136px;width:416px;height:154px;background:#fff"></div><div class="a t" style="left:406px;top:138px;height:15px;line-height:15px;">Výmaz vozidla</div><div class="a " style="left:392px;top:140px;width:11px;height:11px;background:#fff;border:1px solid #555"></div><div class="a " style="left:405px;top:153px;width:382px;height:15px;background:#0A246A"></div><div class="a t" style="left:406px;top:153px;height:15px;line-height:15px;color:#fff">Změna údajů o vozidle (karta,Výměna SPZ/tachometru,Vyřazení SPZ)</div><div class="a " style="left:392px;top:155px;width:11px;height:11px;background:#fff;border:1px solid #555"><svg class="a " style="left:1px;top:1px" width="7" height="7" shape-rendering="crispEdges"><path fill="#000" d="M6 0h1v1h-1zM5 1h2v1h-2zM0 2h1v1h-1zM4 2h3v1h-3zM0 3h2v1h-2zM3 3h3v1h-3zM0 4h5v1h-5zM1 5h3v1h-3zM2 6h1v1h-1z"/></svg></div><div class="a t" style="left:406px;top:168px;height:15px;line-height:15px;">Ostatní výdaje - prohlížení</div><div class="a " style="left:392px;top:170px;width:11px;height:11px;background:#fff;border:1px solid #555"><svg class="a " style="left:1px;top:1px" width="7" height="7" shape-rendering="crispEdges"><path fill="#000" d="M6 0h1v1h-1zM5 1h2v1h-2zM0 2h1v1h-1zM4 2h3v1h-3zM0 3h2v1h-2zM3 3h3v1h-3zM0 4h5v1h-5zM1 5h3v1h-3zM2 6h1v1h-1z"/></svg></div><div class="a t" style="left:406px;top:183px;height:15px;line-height:15px;">Ostatní výdaje - výmaz, editace, přidávání</div><div class="a " style="left:392px;top:185px;width:11px;height:11px;background:#fff;border:1px solid #555"><svg class="a " style="left:1px;top:1px" width="7" height="7" shape-rendering="crispEdges"><path fill="#000" d="M6 0h1v1h-1zM5 1h2v1h-2zM0 2h1v1h-1zM4 2h3v1h-3zM0 3h2v1h-2zM3 3h3v1h-3zM0 4h5v1h-5zM1 5h3v1h-3zM2 6h1v1h-1z"/></svg></div><div class="a t" style="left:406px;top:198px;height:15px;line-height:15px;">Ostatní výdaje - modifikace záznamů z platebních karet</div><div class="a " style="left:392px;top:200px;width:11px;height:11px;background:#fff;border:1px solid #555"></div><div class="a t" style="left:406px;top:213px;height:15px;line-height:15px;">Účty PHM - prohlížení</div><div class="a " style="left:392px;top:215px;width:11px;height:11px;background:#fff;border:1px solid #555"><svg class="a " style="left:1px;top:1px" width="7" height="7" shape-rendering="crispEdges"><path fill="#000" d="M6 0h1v1h-1zM5 1h2v1h-2zM0 2h1v1h-1zM4 2h3v1h-3zM0 3h2v1h-2zM3 3h3v1h-3zM0 4h5v1h-5zM1 5h3v1h-3zM2 6h1v1h-1z"/></svg></div><div class="a t" style="left:406px;top:228px;height:15px;line-height:15px;">Účty PHM - výmaz, editace, přidávání; Spotřeba - editace stavů nádrže</div><div class="a " style="left:392px;top:230px;width:11px;height:11px;background:#fff;border:1px solid #555"><svg class="a " style="left:1px;top:1px" width="7" height="7" shape-rendering="crispEdges"><path fill="#000" d="M6 0h1v1h-1zM5 1h2v1h-2zM0 2h1v1h-1zM4 2h3v1h-3zM0 3h2v1h-2zM3 3h3v1h-3zM0 4h5v1h-5zM1 5h3v1h-3zM2 6h1v1h-1z"/></svg></div><div class="a t" style="left:406px;top:243px;height:15px;line-height:15px;">Účty PHM - modifikace záznamů z platebních karet</div><div class="a " style="left:392px;top:245px;width:11px;height:11px;background:#fff;border:1px solid #555"></div><div class="a t" style="left:406px;top:258px;height:15px;line-height:15px;">Vzorové jízdy - prohlížení</div><div class="a " style="left:392px;top:260px;width:11px;height:11px;background:#fff;border:1px solid #555"><svg class="a " style="left:1px;top:1px" width="7" height="7" shape-rendering="crispEdges"><path fill="#000" d="M6 0h1v1h-1zM5 1h2v1h-2zM0 2h1v1h-1zM4 2h3v1h-3zM0 3h2v1h-2zM3 3h3v1h-3zM0 4h5v1h-5zM1 5h3v1h-3zM2 6h1v1h-1z"/></svg></div><div class="a t" style="left:406px;top:273px;height:15px;line-height:15px;">Vzorové jízdy - výmaz, editace, přidávání</div><div class="a " style="left:392px;top:275px;width:11px;height:11px;background:#fff;border:1px solid #555"><svg class="a " style="left:1px;top:1px" width="7" height="7" shape-rendering="crispEdges"><path fill="#000" d="M6 0h1v1h-1zM5 1h2v1h-2zM0 2h1v1h-1zM4 2h3v1h-3zM0 3h2v1h-2zM3 3h3v1h-3zM0 4h5v1h-5zM1 5h3v1h-3zM2 6h1v1h-1z"/></svg></div><div class="a" style="left:787px;top:138px;width:16px;height:150px;background-color:#fff;background-image:repeating-conic-gradient(#D4D0C8 0 25%,#fff 0 50%);background-size:2px 2px"></div><div class="a wfr" style="left:787px;top:138px;width:16px;height:16px;"><svg class="a" style="left:3px;top:5px" width="7" height="4"><path d="M3 0h1v1h1v1h1v1h1v1h-7v-1h1v-1h1v-1h1z" fill="#000"/></svg></div><div class="a wfr" style="left:787px;top:272px;width:16px;height:16px;"><svg class="a" style="left:3px;top:5px" width="7" height="4"><path d="M0 0h7v1h-1v1h-1v1h-1v1h-1v-1h-1v-1h-1v-1h-1z" fill="#000"/></svg></div><div class="a wfr" style="left:787px;top:153px;width:16px;height:54px;"></div><div class="a etch" style="left:388px;top:302px;width:417px;height:179px;"></div><div class="a t" style="left:396px;top:296px;height:15px;line-height:15px;background:#D4D0C8;padding:0 1px">Změna údajů o vozidle (karta,Výměna SPZ/tachometru,Vyřazení SPZ)</div><div class="a" style="left:397px;top:313px;width:12px;height:12px;border-radius:50%;background:#fff;border:1px solid;border-color:#808080 #fff #fff #808080;box-shadow:inset 1px 1px #404040,inset -1px -1px #D4D0C8"></div><div class="a" style="left:397px;top:330px;width:12px;height:12px;border-radius:50%;background:#fff;border:1px solid;border-color:#808080 #fff #fff #808080;box-shadow:inset 1px 1px #404040,inset -1px -1px #D4D0C8"><div class="a" style="left:4px;top:4px;width:4px;height:4px;background:#000;border-radius:50%"></div></div><div class="a t" style="left:414px;top:312px;height:15px;line-height:15px;">Povolit operaci u <span class="u">v</span>šech vozidel</div><div class="a t" style="left:414px;top:329px;height:15px;line-height:15px;">Povolit operaci <span class="u">p</span>ouze u vybraných vozidel</div><div class="a sunk" style="left:396px;top:345px;width:402px;height:124px;background:#fff"></div><div class="a t" style="left:414px;top:347px;height:15px;line-height:15px;">AKX 65-98 (Ford Mondeo)</div><div class="a " style="left:400px;top:349px;width:11px;height:11px;background:#fff;border:1px solid #555"><svg class="a " style="left:1px;top:1px" width="7" height="7" shape-rendering="crispEdges"><path fill="#000" d="M6 0h1v1h-1zM5 1h2v1h-2zM0 2h1v1h-1zM4 2h3v1h-3zM0 3h2v1h-2zM3 3h3v1h-3zM0 4h5v1h-5zM1 5h3v1h-3zM2 6h1v1h-1z"/></svg></div><div class="a t" style="left:414px;top:362px;height:15px;line-height:15px;">3S9 14-17 (Škoda Octavia Combi)</div><div class="a " style="left:400px;top:364px;width:11px;height:11px;background:#fff;border:1px solid #555"><svg class="a " style="left:1px;top:1px" width="7" height="7" shape-rendering="crispEdges"><path fill="#000" d="M6 0h1v1h-1zM5 1h2v1h-2zM0 2h1v1h-1zM4 2h3v1h-3zM0 3h2v1h-2zM3 3h3v1h-3zM0 4h5v1h-5zM1 5h3v1h-3zM2 6h1v1h-1z"/></svg></div><div class="a t" style="left:414px;top:377px;height:15px;line-height:15px;">3A5 77-85 (Renault Clio)</div><div class="a " style="left:400px;top:379px;width:11px;height:11px;background:#fff;border:1px solid #555"><svg class="a " style="left:1px;top:1px" width="7" height="7" shape-rendering="crispEdges"><path fill="#000" d="M6 0h1v1h-1zM5 1h2v1h-2zM0 2h1v1h-1zM4 2h3v1h-3zM0 3h2v1h-2zM3 3h3v1h-3zM0 4h5v1h-5zM1 5h3v1h-3zM2 6h1v1h-1z"/></svg></div><div class="a t" style="left:414px;top:392px;height:15px;line-height:15px;">3A5 77-84 (Renault Megane)</div><div class="a " style="left:400px;top:394px;width:11px;height:11px;background:#fff;border:1px solid #555"></div><div class="a t" style="left:414px;top:407px;height:15px;line-height:15px;">3A4 15-87 (Škoda Fabia)</div><div class="a " style="left:400px;top:409px;width:11px;height:11px;background:#fff;border:1px solid #555"><svg class="a " style="left:1px;top:1px" width="7" height="7" shape-rendering="crispEdges"><path fill="#000" d="M6 0h1v1h-1zM5 1h2v1h-2zM0 2h1v1h-1zM4 2h3v1h-3zM0 3h2v1h-2zM3 3h3v1h-3zM0 4h5v1h-5zM1 5h3v1h-3zM2 6h1v1h-1z"/></svg></div><div class="a t" style="left:414px;top:422px;height:15px;line-height:15px;">2S1 33-87 (BMW 5)</div><div class="a " style="left:400px;top:424px;width:11px;height:11px;background:#fff;border:1px solid #555"><svg class="a " style="left:1px;top:1px" width="7" height="7" shape-rendering="crispEdges"><path fill="#000" d="M6 0h1v1h-1zM5 1h2v1h-2zM0 2h1v1h-1zM4 2h3v1h-3zM0 3h2v1h-2zM3 3h3v1h-3zM0 4h5v1h-5zM1 5h3v1h-3zM2 6h1v1h-1z"/></svg></div><div class="a " style="left:413px;top:437px;width:366px;height:15px;background:#0A246A"></div><div class="a t" style="left:414px;top:437px;height:15px;line-height:15px;color:#fff">2A8 11-01 (Škoda Superb)</div><div class="a " style="left:400px;top:439px;width:11px;height:11px;background:#fff;border:1px solid #555"></div><div class="a t" style="left:414px;top:452px;height:15px;line-height:15px;">2A4 42-46 (Škoda Fabia)</div><div class="a " style="left:400px;top:454px;width:11px;height:11px;background:#fff;border:1px solid #555"><svg class="a " style="left:1px;top:1px" width="7" height="7" shape-rendering="crispEdges"><path fill="#000" d="M6 0h1v1h-1zM5 1h2v1h-2zM0 2h1v1h-1zM4 2h3v1h-3zM0 3h2v1h-2zM3 3h3v1h-3zM0 4h5v1h-5zM1 5h3v1h-3zM2 6h1v1h-1z"/></svg></div><div class="a" style="left:779px;top:347px;width:16px;height:120px;background-color:#fff;background-image:repeating-conic-gradient(#D4D0C8 0 25%,#fff 0 50%);background-size:2px 2px"></div><div class="a wfr" style="left:779px;top:347px;width:16px;height:16px;"><svg class="a" style="left:3px;top:5px" width="7" height="4"><path d="M3 0h1v1h1v1h1v1h1v1h-7v-1h1v-1h1v-1h1z" fill="#000"/></svg></div><div class="a wfr" style="left:779px;top:451px;width:16px;height:16px;"><svg class="a" style="left:3px;top:5px" width="7" height="4"><path d="M0 0h7v1h-1v1h-1v1h-1v1h-1v-1h-1v-1h-1v-1h-1z" fill="#000"/></svg></div><div class="a wfr" style="left:779px;top:362px;width:16px;height:50px;"></div><div class="a" style="left:652px;top:488px;width:73px;height:25px;background:#D4D0C8;border:1px solid #000;box-shadow:inset 1px 1px #fff,inset -1px -1px #404040,inset -2px -2px #808080"><div class="a" style="left:3px;top:2px;width:65px;height:19px;border:1px dotted #000"></div><div class="a t" style="left:0;right:0;top:3px;height:15px;line-height:15px;text-align:center">OK</div></div><div class="a btn" style="left:732px;top:488px;width:73px;height:25px"><div class="a t" style="left:0;right:0;top:3px;height:15px;line-height:15px;text-align:center">Storno</div></div>
</body></html>
